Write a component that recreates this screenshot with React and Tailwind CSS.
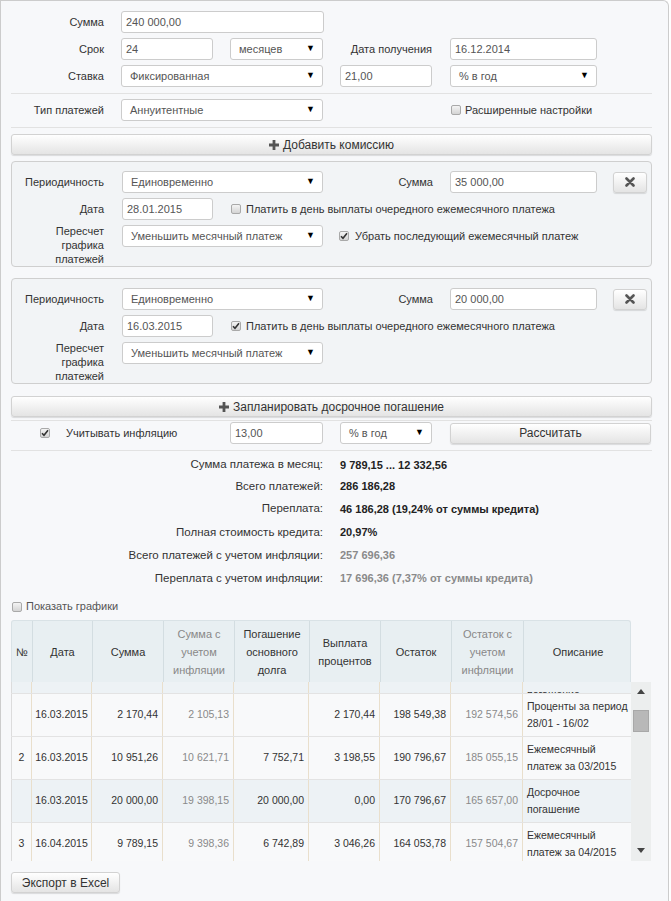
import React from "react";

const font = { fontFamily: '"Liberation Sans", Arial, sans-serif' };

const Input = ({ className, children }) => (
  <div
    className={`flex h-[22px] shrink-0 items-center rounded-[3px] border border-[#cccccc] bg-white px-[4px] text-[11px] text-[#555] ${className}`}
  >
    {children}
  </div>
);

const Select = ({ className, children }) => (
  <div
    className={`flex h-[22px] shrink-0 items-center justify-between rounded-[3px] border border-[#cccccc] bg-white pl-[8px] pr-[7px] text-[11px] text-[#555] ${className}`}
  >
    <span className="whitespace-nowrap">{children}</span>
    <span className="text-[9px] text-black">▼</span>
  </div>
);

const Check = ({ checked, className }) => (
  <span
    className={`flex h-[10px] w-[10px] shrink-0 items-center justify-center rounded-[2px] border border-[#a9a9a9] bg-linear-to-b from-[#f4f4f4] to-[#d4d4d4] ${className}`}
  >
    {checked && (
      <svg width="8" height="8" viewBox="0 0 8 8">
        <path d="M1 4.2 L3 6.3 L7 1.3" fill="none" stroke="#333" strokeWidth="1.6" />
      </svg>
    )}
  </span>
);

const Button = ({ className, children }) => (
  <div
    className={`flex h-[21px] items-center justify-center gap-[4px] rounded-[3px] border border-[#d2d2d2] bg-linear-to-b from-white to-[#e4e4e4] text-[12px] text-[#333] shadow-[0_1px_1px_rgba(0,0,0,0.12)] ${className}`}
  >
    {children}
  </div>
);

const Plus = () => (
  <svg width="10" height="10" viewBox="0 0 10 10">
    <path d="M3.6 0h2.8v3.6H10v2.8H6.4V10H3.6V6.4H0V3.6h3.6z" fill="#555" />
  </svg>
);

const Cross = () => (
  <svg width="10" height="10" viewBox="0 0 10 10">
    <path d="M1.5 1.5 L8.5 8.5 M8.5 1.5 L1.5 8.5" stroke="#555" strokeWidth="2.6" strokeLinecap="round" />
  </svg>
);

const Label = ({ className, children }) => (
  <div className={`shrink-0 text-right text-[11px] text-[#333] ${className}`}>{children}</div>
);

const Panel = ({ amount, date, payDay, removeNext }) => (
  <div className="rounded-[4px] border border-[#cfcfcf] bg-[#f2f4f6] pt-[9px]">
    <div className="flex items-center">
      <Label className="w-[92px]">Периодичность</Label>
      <Select className="ml-[18px] w-[201px]">Единовременно</Select>
      <Label className="ml-[17px] w-[93px]">Сумма</Label>
      <Input className="ml-[17px] w-[147px]">{amount}</Input>
      <Button className="ml-[16px] h-[20px] w-[34px]">
        <Cross />
      </Button>
    </div>
    <div className="mt-[5px] flex items-center">
      <Label className="w-[92px]">Дата</Label>
      <Input className="ml-[18px] w-[91px]">{date}</Input>
      <Check checked={payDay} className="ml-[18px]" />
      <span className="ml-[5px] text-[11px] text-[#333]">
        Платить в день выплаты очередного ежемесячного платежа
      </span>
    </div>
    <div className="mt-[5px] flex items-start">
      <Label className="-mt-[1px] w-[92px] leading-[14px]">
        Пересчет
        <br />
        графика
        <br />
        платежей
      </Label>
      <Select className="ml-[18px] w-[201px]">Уменьшить месячный платеж</Select>
      {removeNext && (
        <div className="flex h-[22px] items-center">
          <Check checked className="ml-[16px]" />
          <span className="ml-[6px] text-[11px] text-[#333]">Убрать последующий ежемесячный платеж</span>
        </div>
      )}
    </div>
  </div>
);

const results = [
  { label: "Сумма платежа в месяц:", value: "9 789,15 ... 12 332,56", h: "h-[22px]" },
  { label: "Всего платежей:", value: "286 186,28", h: "h-[21px]" },
  { label: "Переплата:", value: "46 186,28 (19,24% от суммы кредита)", h: "h-[24px]" },
  { label: "Полная стоимость кредита:", value: "20,97%", h: "h-[23px]" },
  { label: "Всего платежей с учетом инфляции:", value: "257 696,36", gray: true, h: "h-[23px]" },
  { label: "Переплата с учетом инфляции:", value: "17 696,36 (7,37% от суммы кредита)", gray: true, h: "h-[23px]" },
];

const cols = "grid grid-cols-[21px_60px_71px_71px_75px_71px_71px_72px_108px]";

const headers = [
  { t: "№" },
  { t: "Дата" },
  { t: "Сумма" },
  { t: ["Сумма с", "учетом", "инфляции"], gray: true },
  { t: ["Погашение", "основного", "долга"] },
  { t: ["Выплата", "процентов"] },
  { t: "Остаток" },
  { t: ["Остаток с", "учетом", "инфляции"], gray: true },
  { t: "Описание" },
];

const rows = [
  {
    cells: ["", "16.03.2015", "2 170,44", "2 105,13", "", "2 170,44", "198 549,38", "192 574,56"],
    desc: ["Проценты за период", "28/01 - 16/02"],
  },
  {
    cells: ["2", "16.03.2015", "10 951,26", "10 621,71", "7 752,71", "3 198,55", "190 796,67", "185 055,15"],
    desc: ["Ежемесячный", "платеж за 03/2015"],
  },
  {
    cells: ["", "16.03.2015", "20 000,00", "19 398,15", "20 000,00", "0,00", "170 796,67", "165 657,00"],
    desc: ["Досрочное", "погашение"],
    hl: true,
  },
  {
    cells: ["3", "16.04.2015", "9 789,15", "9 398,36", "6 742,89", "3 046,26", "164 053,78", "157 504,67"],
    desc: ["Ежемесячный", "платеж за 04/2015"],
  },
];

const Row = ({ row }) => (
  <div className={`${cols} h-[43px] border-b border-[#e3e3e3] text-[10.5px] ${row.hl ? "bg-[#edf2f5]" : "bg-[#f8f9fa]"}`}>
    {row.cells.map((c, i) => (
      <div
        key={i}
        className={`flex items-center whitespace-nowrap border-r border-[#e9dfcc] ${i === 0 ? "justify-center border-l border-l-[#dcdcdc]" : i === 1 ? "justify-center" : "justify-end pr-[4px]"} ${i === 3 || i === 7 ? "text-[#8a8a8a]" : "text-[#333]"}`}
      >
        {c}
      </div>
    ))}
    <div className="flex flex-col justify-center whitespace-nowrap pl-[4px] leading-[17px] text-[#333]">
      <span>{row.desc[0]}</span>
      <span>{row.desc[1]}</span>
    </div>
  </div>
);

export default function App() {
  return (
    <div style={font} className="min-h-[901px] w-[669px] rounded-tr-[6px] border border-b-0 border-[#cccccc] bg-[#f7f8fa] pl-[10px] pr-[16px] pt-[10px] text-[#333]">
      <div className="flex items-center">
        <Label className="w-[93px]">Сумма</Label>
        <Input className="ml-[17px] w-[203px]">240 000,00</Input>
      </div>
      <div className="mt-[5px] flex items-center">
        <Label className="w-[93px]">Срок</Label>
        <Input className="ml-[17px] w-[92px]">24</Input>
        <Select className="ml-[17px] w-[93px]">месяцев</Select>
        <Label className="ml-[17px] w-[92px]">Дата получения</Label>
        <Input className="ml-[18px] w-[147px]">16.12.2014</Input>
      </div>
      <div className="mt-[5px] flex items-center">
        <Label className="w-[93px]">Ставка</Label>
        <Select className="ml-[17px] w-[202px]">Фиксированная</Select>
        <Input className="ml-[17px] w-[92px]">21,00</Input>
        <Select className="ml-[18px] w-[147px]">% в год</Select>
      </div>
      <div className="mt-[6px] border-t border-[#e2e2e2]" />
      <div className="mt-[5px] flex items-center">
        <Label className="w-[93px]">Тип платежей</Label>
        <Select className="ml-[17px] w-[202px]">Аннуитентные</Select>
        <Check className="ml-[128px]" />
        <span className="ml-[4px] text-[11px]">Расширенные настройки</span>
      </div>
      <div className="mt-[6px] border-t border-[#e2e2e2]" />
      <Button className="mt-[6px]">
        <Plus />
        <span>Добавить комиссию</span>
      </Button>

      <div className="mt-[6px]">
        <Panel amount="35 000,00" date="28.01.2015" payDay={false} removeNext />
      </div>
      <div className="mt-[11px]">
        <Panel amount="20 000,00" date="16.03.2015" payDay removeNext={false} />
      </div>

      <Button className="mt-[12px]">
        <Plus />
        <span>Запланировать досрочное погашение</span>
      </Button>
      <div className="mt-[3px] border-t border-[#e2e2e2]" />
      <div className="mt-[1px] flex items-center">
        <Check checked className="ml-[29px]" />
        <span className="ml-[16px] w-[164px] text-[11px]">Учитывать инфляцию</span>
        <Input className="w-[93px]">13,00</Input>
        <Select className="ml-[17px] w-[92px]">% в год</Select>
        <Button className="ml-[18px] w-[201px]">Рассчитать</Button>
      </div>
      <div className="mt-[6px] border-t border-[#e2e2e2]" />

      <div className="mt-[3px]">
        {results.map((r) => (
          <div key={r.label} className={`flex items-center ${r.h}`}>
            <div className="w-[312px] text-right text-[11.5px]">{r.label}</div>
            <div className={`ml-[17px] text-[11px] font-bold ${r.gray ? "text-[#8a8a8a]" : "text-[#222]"}`}>{r.value}</div>
          </div>
        ))}
      </div>

      <div className="mt-[10px] flex h-[13px] items-center">
        <Check className="ml-[1px]" />
        <span className="ml-[4px] text-[11px] text-[#555]">Показать графики</span>
      </div>

      <div className="mt-[7px] w-[620px]">
        <div className={`${cols} h-[62px] rounded-t-[3px] border border-b-0 border-[#d9e2e6] bg-[#e8eff2] text-[11px] leading-[18px]`}>
          {headers.map((h, i) => (
            <div
              key={i}
              className={`flex flex-col items-center justify-center text-center ${i < 8 ? "border-r border-[#d3dde1]" : ""} ${h.gray ? "text-[#888]" : "text-[#333]"}`}
            >
              {Array.isArray(h.t) ? h.t.map((l) => <span key={l}>{l}</span>) : h.t}
            </div>
          ))}
        </div>
      </div>

      <div className="flex w-[640px]">
        <div className="h-[179px] w-[620px] overflow-hidden">
          <div className={`${cols} h-[12px] border-b border-[#e3e3e3] bg-[#edf2f5] text-[10.5px]`}>
            {[0, 1, 2, 3, 4, 5, 6, 7].map((i) => (
              <div key={i} className={`border-r border-[#e9dfcc] ${i === 0 ? "border-l border-l-[#dcdcdc]" : ""}`} />
            ))}
            <div className="flex items-end overflow-hidden pl-[4px] leading-[17px]">
              <span className="-mb-[10px]">погашение</span>
            </div>
          </div>
          {rows.map((r, i) => (
            <Row key={i} row={r} />
          ))}
        </div>
        <div className="flex h-[179px] w-[20px] flex-col items-center bg-[#eceeee] pt-[7px]">
          <svg width="8" height="5" viewBox="0 0 8 5">
            <path d="M0 5 L4 0 L8 5z" fill="#444" />
          </svg>
          <div className="mt-[16px] h-[22px] w-[16px] border border-[#a8a8a8] bg-[#b8b8b8]" />
          <div className="flex-1" />
          <svg width="8" height="5" viewBox="0 0 8 5" className="mb-[8px]">
            <path d="M0 0 L8 0 L4 5z" fill="#444" />
          </svg>
        </div>
      </div>

      <Button className="mt-[11px] w-[109px]">Экспорт в Excel</Button>
    </div>
  );
}
